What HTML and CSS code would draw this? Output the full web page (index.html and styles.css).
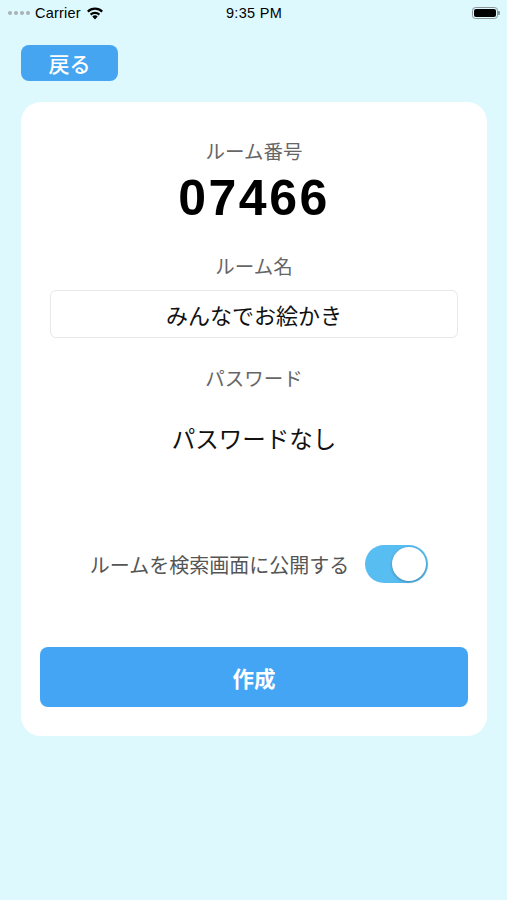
FILE: index.html
```
<!DOCTYPE html>
<html lang="ja">
<head>
<meta charset="utf-8">
<link rel="stylesheet" href="styles.css">
</head>
<body>
<div class="status">
  <div class="status-left">
    <span class="dots"><i></i><i></i><i></i><i></i></span>
    <span class="carrier">Carrier</span>
    <svg class="wifi" width="18" height="13" viewBox="0 0 18 13">
      <path d="M9 12.5 L6.3 9.4 A4 4 0 0 1 11.7 9.4 Z" fill="#000"/>
      <path d="M4.6 7.6 A6.4 6.4 0 0 1 13.4 7.6" stroke="#000" stroke-width="2.2" fill="none"/>
      <path d="M1.8 4.6 A10.3 10.3 0 0 1 16.2 4.6" stroke="#000" stroke-width="2.2" fill="none"/>
    </svg>
  </div>
  <div class="time">9:35 PM</div>
  <div class="status-right">
    <span class="battery"><span class="level"></span></span><span class="nub"></span>
  </div>
</div>

<div class="top">
  <button class="back">戻る</button>
</div>

<div class="card">
  <div class="label first">ルーム番号</div>
  <div class="number">07466</div>
  <div class="label gap">ルーム名</div>
  <div class="input">みんなでお絵かき</div>
  <div class="label gap">パスワード</div>
  <div class="pw">パスワードなし</div>
  <div class="toggle-row">
    <span class="toggle-label">ルームを検索画面に公開する</span>
    <span class="toggle"><span class="knob"></span></span>
  </div>
  <button class="create">作成</button>
</div>
</body>
</html>
```
FILE: styles.css
```
* { box-sizing: border-box; }
html, body { margin: 0; padding: 0; }
body {
  width: 507px;
  height: 900px;
  background: #ddf9fd;
  font-family: "Noto Sans CJK JP", "Noto Sans", "Liberation Sans", sans-serif;
  overflow: hidden;
}
.status {
  height: 26px;
  display: flex;
  align-items: center;
  justify-content: space-between;
  padding: 0 7px 0 8px;
  font-family: "Liberation Sans", Arial, sans-serif;
  font-size: 14.5px;
  color: #000;
  position: relative;
}
.status-left { display: flex; align-items: center; width: 120px; }
.dots { display: flex; gap: 2px; margin-right: 5px; }
.dots i { display: block; width: 4px; height: 4px; border-radius: 50%; background: #a9b2b4; }
.carrier { margin-right: 5px; letter-spacing: 0.2px; }
.wifi { display: block; }
.time { letter-spacing: 0.3px; }
.status-right { width: 120px; display: flex; justify-content: flex-end; align-items: center; }
.battery {
  width: 26px; height: 12px;
  border: 1px solid #8a9698;
  border-radius: 3.5px;
  padding: 1px;
  display: flex;
}
.level { flex: 1; background: #000; border-radius: 2px; }
.nub { width: 2px; height: 4px; background: #8a9698; border-radius: 0 1px 1px 0; }

.top { padding: 19px 0 0 21px; }
.back {
  width: 97px; height: 36px;
  border: none;
  border-radius: 8px;
  background: #45a5f1;
  color: #fff;
  font-family: "Noto Sans CJK JP", sans-serif;
  font-size: 21px;
  font-weight: 500;
  padding: 0;
  line-height: 36px;
  display: block;
}
.card {
  margin: 21px 20px 0 21px;
  height: 634px;
  background: #fff;
  border-radius: 20px;
  padding: 36px 19px 0;
  display: flex;
  flex-direction: column;
  align-items: stretch;
  text-align: center;
}
.label {
  font-size: 19.5px;
  line-height: 26px;
  color: #666;
}
.label.gap { margin-top: 27px; }
.number {
  margin-top: 6px;
  font-family: "Liberation Sans", Arial, sans-serif;
  font-weight: 700;
  font-size: 50px;
  line-height: 56px;
  letter-spacing: 2.5px;
  color: #000;
}
.input {
  margin: 11px 10px 0;
  height: 48px;
  border: 1px solid #e6e8ea;
  border-radius: 6px;
  font-size: 22px;
  line-height: 46px;
  color: #111;
}
.pw {
  margin-top: 32px;
  font-size: 23.5px;
  line-height: 30px;
  color: #111;
  font-weight: 400;
}
.toggle-row {
  margin-top: 92px;
  height: 38px;
  display: flex;
  align-items: center;
  justify-content: center;
  gap: 16px;
  padding-left: 10px;
}
.toggle-label { font-size: 20px; color: #555; }
.toggle {
  width: 63px; height: 38px;
  border-radius: 19px;
  background: #58bdf1;
  position: relative;
  display: block;
}
.knob {
  position: absolute;
  right: 2px; top: 2px;
  width: 34px; height: 34px;
  border-radius: 50%;
  background: #fff;
  box-shadow: 0 1px 3px rgba(0,0,0,0.3);
}
.create {
  margin-top: 64px;
  height: 60px;
  border: none;
  border-radius: 8px;
  background: #43a5f4;
  color: #fff;
  font-family: "Noto Sans CJK JP", sans-serif;
  font-size: 21.5px;
  font-weight: 700;
  padding: 0;
}
```
